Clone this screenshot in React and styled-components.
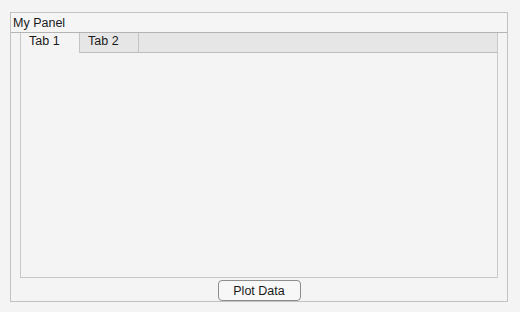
import React, { useState } from "react";
import styled, { createGlobalStyle } from "styled-components";

const Global = createGlobalStyle`
  html, body { margin: 0; padding: 0; background: #f4f4f4; }
  body { font-family: "Liberation Sans", Arial, sans-serif; }
`;

const Page = styled.div`
  padding: 12px 0 0 10px;
`;

const Panel = styled.div`
  box-sizing: border-box;
  width: 498px;
  height: 290px;
  border: 1px solid #c2c2c2;
  display: flex;
  flex-direction: column;
  background: #f4f4f4;
`;

const Title = styled.div`
  height: 19px;
  border-bottom: 1px solid #b4b4b4;
  background: #f5f5f5;
  font-size: 12.5px;
  line-height: 20px;
  padding-left: 2px;
  color: #1a1a1a;
`;

const TabGroup = styled.div`
  box-sizing: border-box;
  margin-left: 9px;
  width: 478px;
  height: 245px;
  border: 1px solid #c8c8c8;
  border-top: none;
  display: flex;
  flex-direction: column;
`;

const TabStrip = styled.div`
  display: flex;
  height: 19px;
  background: #e6e6e6;
  border-bottom: 1px solid #bdbdbd;
`;

const Tab = styled.div`
  box-sizing: border-box;
  width: 59px;
  height: ${(p) => (p.$active ? "20px" : "19px")};
  border-right: 1px solid #c4c4c4;
  background: ${(p) => (p.$active ? "#f4f4f4" : "#e6e6e6")};
  font-size: 12.5px;
  line-height: 17px;
  padding-left: 8px;
  color: #1a1a1a;
  cursor: default;
  position: relative;
  z-index: 1;
`;

const TabBody = styled.div`
  flex: 1;
  background: #f4f4f4;
`;

const Footer = styled.div`
  display: flex;
  justify-content: center;
  margin-top: 2px;
`;

const Button = styled.button`
  box-sizing: border-box;
  width: 83px;
  height: 21px;
  border: 1px solid #8c8c8c;
  border-radius: 4px;
  background: #f7f7f7;
  font-family: "Liberation Sans", Arial, sans-serif;
  font-size: 12.5px;
  color: #1a1a1a;
  padding: 1px 0 0;
  line-height: 19px;
`;

export default function App() {
  const [active, setActive] = useState(0);
  const tabs = ["Tab 1", "Tab 2"];
  return (
    <Page>
      <Global />
      <Panel>
        <Title>My Panel</Title>
        <TabGroup>
          <TabStrip>
            {tabs.map((t, i) => (
              <Tab key={t} $active={active === i} onClick={() => setActive(i)}>
                {t}
              </Tab>
            ))}
          </TabStrip>
          <TabBody />
        </TabGroup>
        <Footer>
          <Button>Plot Data</Button>
        </Footer>
      </Panel>
    </Page>
  );
}
